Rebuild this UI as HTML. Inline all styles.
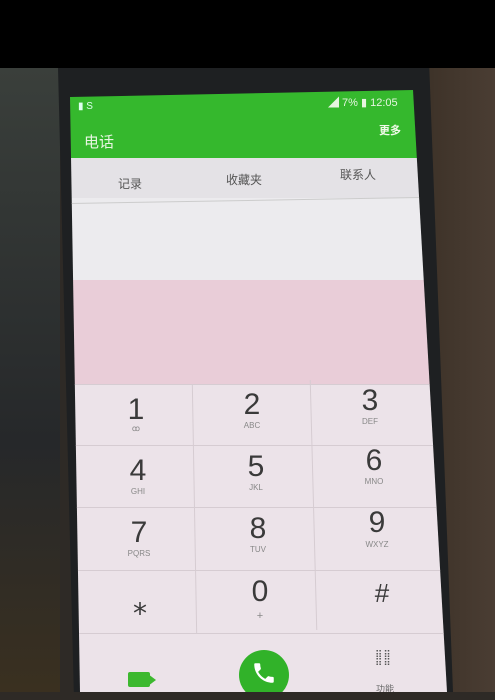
<!DOCTYPE html>
<html><head><meta charset="utf-8"><style>
*{margin:0;padding:0;box-sizing:border-box}
body{width:495px;height:692px;overflow:hidden;background:#2e2a26;position:relative;font-family:"Liberation Sans","Noto Sans CJK SC",sans-serif}
.a{position:absolute}
#top{left:0;top:0;width:495px;height:68px;background:#000}
#lefth{left:0;top:68px;width:60px;height:624px;background:linear-gradient(#3a3f3b,#26282a 60%,#3a3020)}
#righth{left:425px;top:68px;width:70px;height:624px;background:linear-gradient(90deg,#3d3228,#4a3d33)}
#phone{left:58px;top:68px;width:395px;height:624px;background:#1e2022;clip-path:polygon(0 0,94% 0,100% 100%,4% 100%)}
#scr{left:0;top:0;width:495px;height:692px;clip-path:polygon(70px 97px,413px 90px,447px 692px,80px 692px)}
.num{position:absolute;font-size:30px;color:#3a3a3a;width:60px;text-align:center}
.let{position:absolute;font-size:8px;color:#888;width:60px;text-align:center}
.hl{position:absolute;height:1px;background:#d6ccd2}
.vl{position:absolute;width:1px;background:#d6ccd2}
</style></head><body>
<div class="a" id="lefth"></div><div class="a" id="righth"></div>
<div class="a" id="phone"></div>
<div class="a" id="top"></div>
<div class="a" id="scr">
 <div class="a" style="left:60px;top:85px;width:400px;height:73px;background:#35b82d"></div>
 <div class="a" style="left:60px;top:158px;width:400px;height:40px;background:#e4e2e6"></div>
 <div class="a" style="left:60px;top:198px;width:400px;height:82px;background:#ecebee"></div>
 <div class="a" style="left:60px;top:280px;width:400px;height:105px;background:#e9cdd8"></div>
 <div class="a" style="left:60px;top:385px;width:400px;height:307px;background:#ece3e9"></div>
 <div class="a" style="left:78px;top:101px;font-size:10px;color:#dfe">▮ S</div>
 <div class="a" style="left:328px;top:94px;font-size:11px;color:#e6f5e0">◢ 7% ▮ 12:05</div>
 <div class="a" style="left:84px;top:131px;font-size:15px;color:#e8f5e2">电话</div>
 <div class="a" style="left:379px;top:122px;font-size:11px;color:#f0fae8;font-weight:bold">更多</div>
 <div class="a" style="left:118px;top:175px;font-size:12px;color:#555">记录</div>
 <div class="a" style="left:226px;top:171px;font-size:12px;color:#555">收藏夹</div>
 <div class="a" style="left:340px;top:166px;font-size:12px;color:#555">联系人</div>
 <div class="a" style="left:70px;top:200px;width:350px;height:1px;background:#ccc;transform:rotate(-1deg)"></div>
 <div class="hl" style="left:60px;top:384px;width:400px"></div>
 <div class="hl" style="left:60px;top:445px;width:400px"></div>
 <div class="hl" style="left:60px;top:507px;width:400px"></div>
 <div class="hl" style="left:60px;top:570px;width:400px"></div>
 <div class="hl" style="left:60px;top:633px;width:400px"></div>
 <div class="vl" style="left:194px;top:384px;height:250px;transform:rotate(-1deg)"></div>
 <div class="vl" style="left:313px;top:380px;height:250px;transform:rotate(-1.5deg)"></div>
 <div class="num" style="left:106px;top:393px">1</div><div class="let" style="left:106px;top:424px">ꝏ</div>
 <div class="num" style="left:222px;top:388px">2</div><div class="let" style="left:222px;top:421px">ABC</div>
 <div class="num" style="left:340px;top:384px">3</div><div class="let" style="left:340px;top:417px">DEF</div>
 <div class="num" style="left:108px;top:454px">4</div><div class="let" style="left:108px;top:487px">GHI</div>
 <div class="num" style="left:226px;top:450px">5</div><div class="let" style="left:226px;top:483px">JKL</div>
 <div class="num" style="left:344px;top:444px">6</div><div class="let" style="left:344px;top:477px">MNO</div>
 <div class="num" style="left:109px;top:516px">7</div><div class="let" style="left:109px;top:549px">PQRS</div>
 <div class="num" style="left:228px;top:512px">8</div><div class="let" style="left:228px;top:545px">TUV</div>
 <div class="num" style="left:347px;top:506px">9</div><div class="let" style="left:347px;top:540px">WXYZ</div>
 <div class="num" style="left:110px;top:588px;font-size:28px">⁎</div>
 <div class="num" style="left:230px;top:575px">0</div><div class="let" style="left:230px;top:610px;font-size:11px">+</div>
 <div class="num" style="left:352px;top:578px;font-size:26px">#</div>
 <div class="a" style="left:128px;top:672px;width:22px;height:15px;background:#3db82f;border-radius:2px"></div>
 <div class="a" style="left:148px;top:674px;width:0;height:0;border-top:6px solid transparent;border-bottom:6px solid transparent;border-right:8px solid #3db82f;transform:scaleX(-1)"></div>
 <div class="a" style="left:239px;top:650px;width:50px;height:50px;border-radius:50%;background:#31b229"></div>
 <svg class="a" style="left:251px;top:660px" width="26" height="26" viewBox="0 0 24 24"><path d="M6.6 10.8c1.4 2.8 3.8 5.1 6.6 6.6l2.2-2.2c.3-.3.7-.4 1-.2 1.1.4 2.3.6 3.6.6.6 0 1 .4 1 1V20c0 .6-.4 1-1 1C10.6 21 3 13.4 3 4c0-.6.4-1 1-1h3.5c.6 0 1 .4 1 1 0 1.3.2 2.5.6 3.6.1.3 0 .7-.2 1z" fill="#fff"/></svg>
 <div class="a" style="left:375px;top:652px;font-size:10px;color:#555;line-height:8px;letter-spacing:1px">⠿⠿<br>⠿⠿</div>
 <div class="a" style="left:376px;top:682px;font-size:9px;color:#666">功能</div>
</div>
</body></html>
